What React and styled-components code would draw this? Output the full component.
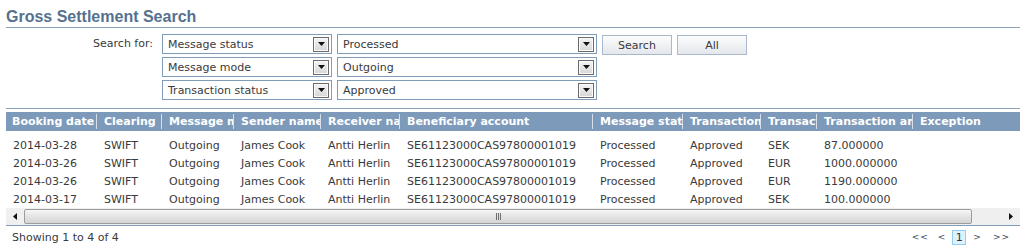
import React from "react";
import styled, { createGlobalStyle } from "styled-components";

const Global = createGlobalStyle`
  html, body { margin: 0; padding: 0; background: #fff; }
  body { font-family: "DejaVu Sans", Verdana, sans-serif; font-size: 11px; color: #3a3a3a; }
`;

const Page = styled.div`
  width: 1014px;
  padding: 0 6px;
`;

const Title = styled.h1`
  margin: 0;
  padding-top: 7px;
  height: 20px;
  line-height: 20px;
  font-family: "Liberation Sans", Arial, sans-serif;
  font-weight: bold;
  font-size: 16px;
  color: #56718f;
  border-bottom: 1px solid #8ba2bc;
`;

const Form = styled.div`
  display: grid;
  grid-template-columns: 151px 170px 260px 70px 70px;
  grid-auto-rows: 20px;
  column-gap: 5px;
  row-gap: 3px;
  padding: 6px 0 8px;
  border-bottom: 1px solid #8ba2bc;
`;

const Label = styled.div`
  grid-column: 1;
  text-align: right;
  padding-right: 4px;
  line-height: 20px;
  color: #3a3a3a;
`;

const SelectBox = styled.div`
  grid-column: ${(p) => p.col};
  display: flex;
  align-items: center;
  border: 1px solid #7f9db9;
  background: #fff;
  box-sizing: border-box;
  height: 20px;
  padding-left: 5px;
  padding-right: 2px;
  color: #3a3a3a;
`;

const SelectText = styled.span`
  flex: 1;
`;

const ArrowBtn = styled.span`
  width: 16px;
  height: 15px;
  box-sizing: border-box;
  border: 1px solid #6b6b6b;
  box-shadow: inset 0 0 0 1px #fafafa;
  background: linear-gradient(#f4f4f4, #d6d6d6);
  display: flex;
  align-items: center;
  justify-content: center;
`;

const Button = styled.button`
  grid-column: ${(p) => p.col};
  height: 20px;
  margin-top: 1px;
  box-sizing: border-box;
  border: 1px solid #a9b8ca;
  background: linear-gradient(#fcfcfc, #e3e7ec);
  font-family: "DejaVu Sans", Verdana, sans-serif;
  font-size: 11px;
  color: #3a3a3a;
  padding: 0;
`;

const Table = styled.div`
  margin-top: 3px;
`;

const cols = "91px 65px 72px 87px 79px 193px 90px 78px 56px 96px 107px";

const HeadRow = styled.div`
  display: grid;
  grid-template-columns: ${cols};
  background: #7d9aba;
  height: 19px;
  align-items: center;
`;

const HeadCell = styled.div`
  color: #fff;
  font-weight: bold;
  white-space: nowrap;
  overflow: hidden;
  padding-left: ${(p) => (p.first ? 6 : 7)}px;
  line-height: 15px;
  border-right: ${(p) => (p.last ? "none" : "1px solid #d5dee9")};
`;

const Body = styled.div`
  padding-top: 5px;
`;

const Row = styled.div`
  display: grid;
  grid-template-columns: ${cols};
  height: 18px;
  align-items: center;
`;

const Cell = styled.div`
  white-space: nowrap;
  overflow: hidden;
  padding-left: 7px;
  color: #3a3a3a;
`;

const Scroll = styled.div`
  display: flex;
  height: 17px;
  background: #efefef;
  border-bottom: 1px solid #7f9db9;
`;

const ScrollArrow = styled.div`
  width: 18px;
  display: flex;
  align-items: center;
  justify-content: center;
  background: #f0f0f0;
`;

const Track = styled.div`
  flex: 1;
  display: flex;
  padding: 1px 0;
`;

const Thumb = styled.div`
  width: 948px;
  box-sizing: border-box;
  border: 1px solid #9c9c9c;
  border-radius: 2px;
  background: linear-gradient(#f6f6f6, #e4e4e4 50%, #d4d4d4);
  display: flex;
  align-items: center;
  justify-content: center;
`;

const Grip = styled.div`
  display: flex;
  gap: 1px;
  & > span {
    width: 1px;
    height: 7px;
    background: #6d6d6d;
  }
`;

const Footer = styled.div`
  display: flex;
  justify-content: space-between;
  align-items: center;
  height: 22px;
  padding-left: 6px;
`;

const Pager = styled.div`
  display: flex;
  align-items: center;
  padding-right: 10px;
`;

const PageLink = styled.span`
  font-size: 9px;
  letter-spacing: 1px;
  margin-right: ${(p) => p.mr || 0}px;
  color: #3c4a5c;
`;

const PageNum = styled.span`
  width: 14px;
  height: 15px;
  box-sizing: border-box;
  border: 1px solid #8fd0ee;
  background: #ddf2fc;
  display: flex;
  align-items: center;
  justify-content: center;
  color: #333;
  margin-right: 7px;
`;

const Tri = ({ dir }) => {
  const pts = {
    down: "0,0 7,0 3.5,4",
    left: "4,0 4,7 0,3.5",
    right: "0,0 0,7 4,3.5",
  }[dir];
  const w = dir === "down" ? 7 : 4;
  const h = dir === "down" ? 4 : 7;
  return (
    <svg width={w} height={h} viewBox={`0 0 ${w} ${h}`}>
      <polygon points={pts} fill="#111" />
    </svg>
  );
};

const Select = ({ col, value }) => (
  <SelectBox col={col}>
    <SelectText>{value}</SelectText>
    <ArrowBtn>
      <Tri dir="down" />
    </ArrowBtn>
  </SelectBox>
);

const headers = [
  "Booking date",
  "Clearing",
  "Message mode",
  "Sender name",
  "Receiver name",
  "Beneficiary account",
  "Message status",
  "Transaction status",
  "Transaction currency",
  "Transaction amount",
  "Exception",
];

const rows = [
  ["2014-03-28", "SEK", "87.000000"],
  ["2014-03-26", "EUR", "1000.000000"],
  ["2014-03-26", "EUR", "1190.000000"],
  ["2014-03-17", "SEK", "100.000000"],
];

export default function App() {
  return (
    <Page>
      <Global />
      <Title>Gross Settlement Search</Title>
      <Form>
        <Label>Search for:</Label>
        <Select col={2} value="Message status" />
        <Select col={3} value="Processed" />
        <Button col={4}>Search</Button>
        <Button col={5}>All</Button>
        <Select col={2} value="Message mode" />
        <Select col={3} value="Outgoing" />
        <Select col={2} value="Transaction status" />
        <Select col={3} value="Approved" />
      </Form>
      <Table>
        <HeadRow>
          {headers.map((h, i) => (
            <HeadCell key={h} first={i === 0} last={i === headers.length - 1}>
              {h}
            </HeadCell>
          ))}
        </HeadRow>
        <Body>
          {rows.map((r, i) => (
            <Row key={i}>
              <Cell>{r[0]}</Cell>
              <Cell>SWIFT</Cell>
              <Cell>Outgoing</Cell>
              <Cell>James Cook</Cell>
              <Cell>Antti Herlin</Cell>
              <Cell>SE61123000CAS97800001019</Cell>
              <Cell>Processed</Cell>
              <Cell>Approved</Cell>
              <Cell>{r[1]}</Cell>
              <Cell>{r[2]}</Cell>
              <Cell></Cell>
            </Row>
          ))}
        </Body>
        <Scroll>
          <ScrollArrow>
            <Tri dir="left" />
          </ScrollArrow>
          <Track>
            <Thumb>
              <Grip>
                <span />
                <span />
                <span />
              </Grip>
            </Thumb>
          </Track>
          <ScrollArrow>
            <Tri dir="right" />
          </ScrollArrow>
        </Scroll>
      </Table>
      <Footer>
        <span>Showing 1 to 4 of 4</span>
        <Pager>
          <PageLink mr={9}>&lt;&lt;</PageLink>
          <PageLink mr={6}>&lt;</PageLink>
          <PageNum>1</PageNum>
          <PageLink mr={11}>&gt;</PageLink>
          <PageLink>&gt;&gt;</PageLink>
        </Pager>
      </Footer>
    </Page>
  );
}
